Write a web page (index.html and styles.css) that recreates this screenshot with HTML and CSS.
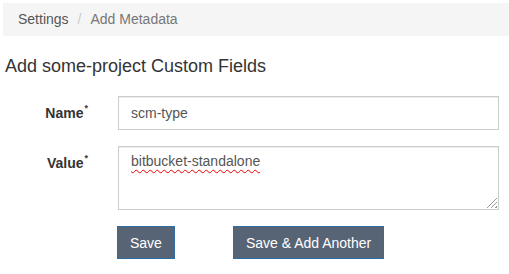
FILE: index.html
```html
<!DOCTYPE html>
<html>
<head>
<meta charset="utf-8">
<link rel="stylesheet" href="styles.css">
</head>
<body>
<ol class="breadcrumb">
  <li><a href="#">Settings</a></li>
  <li class="sep">/</li>
  <li class="active">Add Metadata</li>
</ol>
<h3 class="title">Add some-project Custom Fields</h3>
<form class="form">
  <div class="row">
    <label class="label">Name<sup>*</sup></label>
    <input class="control" type="text" value="scm-type">
  </div>
  <div class="row">
    <label class="label">Value<sup>*</sup></label>
    <div class="control area"><span class="spell">bitbucket-standalone</span><span class="grip"></span></div>
  </div>
  <div class="actions">
    <button type="button" class="btn">Save</button>
    <button type="button" class="btn">Save &amp; Add Another</button>
  </div>
</form>
</body>
</html>
```
FILE: styles.css
```css
* { box-sizing: border-box; }
html, body { margin: 0; padding: 0; background: #fff; }
body {
  padding: 3px 0 0 3px;
  font-family: "Liberation Sans", Arial, sans-serif;
  font-size: 14px;
  color: #333;
}
.breadcrumb {
  list-style: none;
  margin: 0;
  padding: 8px 15px;
  height: 33px;
  line-height: 17px;
  background: #f5f5f5;
  display: flex;
}
.breadcrumb li { color: #777; }
.breadcrumb a { color: #555; text-decoration: none; }
.breadcrumb .sep { color: #ccc; padding: 0 9px 0 9px; }
.title {
  margin: 20px 0 0 2px;
  font-size: 18px;
  font-weight: normal;
  line-height: 20px;
  color: #333;
}
.form { margin-top: 20px; }
.row {
  display: grid;
  grid-template-columns: 85px 381px;
  column-gap: 30px;
  margin-bottom: 16px;
  align-items: start;
}
.label {
  text-align: right;
  font-weight: bold;
  padding-top: 8px;
  line-height: 18px;
}
.label sup { font-size: 9px; line-height: 0; position: relative; top: -1px; margin-left: 1px; }
.control {
  display: block;
  width: 381px;
  height: 34px;
  padding: 6px 12px;
  font-family: "Liberation Sans", Arial, sans-serif;
  font-size: 14px;
  color: #555;
  border: 1px solid #ccc;
  background: #fff;
  box-shadow: inset 0 1px 1px rgba(0,0,0,0.075);
  outline: none;
  border-radius: 0;
}
.area {
  position: relative;
  height: 64px;
  line-height: 20px;
  padding-top: 4px;
}
.spell {
  text-decoration: underline wavy #e00;
  text-decoration-thickness: 1px;
  text-underline-offset: 3px;
}
.grip {
  position: absolute;
  right: 1px;
  bottom: 1px;
  width: 11px;
  height: 11px;
  background: repeating-linear-gradient(135deg, transparent 0 2px, #999 2px 3px);
  clip-path: polygon(100% 0, 100% 100%, 0 100%);
}
.actions {
  display: flex;
  gap: 58px;
  padding-left: 114px;
  margin-top: 15px;
}
.btn {
  height: 33px;
  padding: 6px 12px;
  font-family: "Liberation Sans", Arial, sans-serif;
  font-size: 14px;
  color: #fff;
  background: #566476;
  border: 1px solid #2e6da4;
  border-radius: 0;
}
```
